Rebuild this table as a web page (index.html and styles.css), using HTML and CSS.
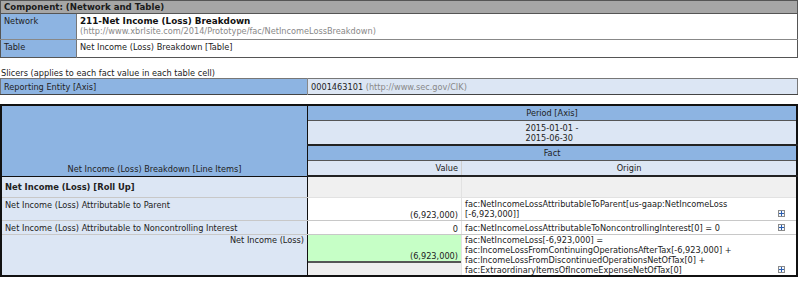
FILE: index.html
```html
<!DOCTYPE html>
<html>
<head>
<meta charset="utf-8">
<link rel="stylesheet" href="styles.css">
</head>
<body>
<table class="comp">
  <tr><th colspan="2" class="comp-head">Component: (Network and Table)</th></tr>
  <tr class="net-row">
    <td class="lbl">Network</td>
    <td class="val"><div class="net-title">211-Net Income (Loss) Breakdown</div><div class="url">(http://www.xbrlsite.com/2014/Prototype/fac/NetIncomeLossBreakdown)</div></td>
  </tr>
  <tr class="tbl-row">
    <td class="lbl">Table</td>
    <td class="val">Net Income (Loss) Breakdown [Table]</td>
  </tr>
</table>

<div class="slicers-title">Slicers (applies to each fact value in each table cell)</div>
<table class="slicers">
  <tr>
    <td class="s-lbl">Reporting Entity [Axis]</td>
    <td class="s-val">0001463101 <span class="url">(http://www.sec.gov/CIK)</span></td>
  </tr>
</table>

<table class="main">
  <tr class="h1">
    <th rowspan="4" class="corner">Net Income (Loss) Breakdown [Line Items]</th>
    <th colspan="2" class="axis">Period [Axis]</th>
  </tr>
  <tr class="h2">
    <th colspan="2" class="period"><div class="period-text">2015-01-01 -<br>2015-06-30</div></th>
  </tr>
  <tr class="h3">
    <th colspan="2" class="axis fact">Fact</th>
  </tr>
  <tr class="h4">
    <th class="colh value-h">Value</th>
    <th class="colh origin-h">Origin</th>
  </tr>
  <tr class="rollup">
    <td class="line bold">Net Income (Loss) [Roll Up]</td>
    <td class="empty v"></td>
    <td class="empty o"></td>
  </tr>
  <tr class="r-parent">
    <td class="line">Net Income (Loss) Attributable to Parent</td>
    <td class="num">(6,923,000)</td>
    <td class="origin"><div class="origin-wrap"><span class="otext">fac:NetIncomeLossAttributableToParent[us-gaap:NetIncomeLoss<br>[-6,923,000]]</span><span class="plus"></span></div></td>
  </tr>
  <tr class="r-nci">
    <td class="line">Net Income (Loss) Attributable to Noncontrolling Interest</td>
    <td class="num">0</td>
    <td class="origin"><div class="origin-wrap"><span class="otext">fac:NetIncomeLossAttributableToNoncontrollingInterest[0] = 0</span><span class="plus"></span></div></td>
  </tr>
  <tr class="r-total">
    <td class="line right">Net Income (Loss)</td>
    <td class="num total"><div class="total-box">(6,923,000)</div></td>
    <td class="origin"><div class="origin-wrap"><span class="otext">fac:NetIncomeLoss[-6,923,000] =<br>fac:IncomeLossFromContinuingOperationsAfterTax[-6,923,000] +<br>fac:IncomeLossFromDiscontinuedOperationsNetOfTax[0] +<br>fac:ExtraordinaryItemsOfIncomeExpenseNetOfTax[0]</span><span class="plus"></span></div></td>
  </tr>
</table>
</body>
</html>
```

FILE: styles.css
```css
html, body {
  margin: 0;
  padding: 0;
  background: #ffffff;
}
body {
  font-family: "DejaVu Sans", Verdana, sans-serif;
  font-size: 8.2px;
  line-height: 10px;
  color: #222222;
}
table {
  border-collapse: collapse;
  border-spacing: 0;
}
th, td {
  padding: 0;
  font-weight: normal;
}

/* component table */
.comp {
  width: 798px;
  border: 1px solid #555555;
}
.comp-head {
  background: #a6a6a6;
  text-align: left;
  font-weight: bold;
  font-size: 8.6px;
  height: 12px;
  padding: 0 3px;
  border-bottom: 1px solid #555555;
  color: #1a1a1a;
}
.comp .lbl {
  width: 69px;
  background: #8db4e2;
  border-right: 1px solid #777777;
  vertical-align: top;
  padding: 2px 3px 0 3px;
}
.comp .val {
  background: #ffffff;
  vertical-align: top;
  padding: 2px 3px 0 3px;
}
.net-row td {
  height: 23px;
  border-bottom: 1px solid #888888;
}
.tbl-row td {
  height: 15px;
}
.net-title {
  font-weight: bold;
  font-size: 8.8px;
  color: #111111;
}
.url {
  color: #888888;
}

.slicers-title {
  margin-top: 10px;
  height: 10px;
  padding-left: 1px;
}
.slicers {
  width: 798px;
  border: 1px solid #777777;
  border-bottom-color: #444444;
  margin-top: 0;
}
.slicers td {
  height: 15px;
  padding: 0 3px;
  vertical-align: middle;
}
.s-lbl {
  width: 300px;
  background: #8db4e2;
  border-right: 1px solid #888888;
}
.s-val {
  background: #dce6f4;
}

/* main table */
.main {
  width: 798px;
  margin-top: 9px;
  border: 2px solid #111111;
}
.corner {
  width: 305px;
  background: #8db4e2;
  border-right: 1px solid #111111;
  border-bottom: 1px solid #111111;
  vertical-align: bottom;
  text-align: center;
  padding-bottom: 2px;
}
.axis {
  background: #8db4e2;
  text-align: center;
  height: 14px;
  border-bottom: 1px solid #555555;
}
.period {
  background: #dce6f4;
  height: 23px;
  text-align: center;
  border-bottom: 2px solid #222222;
}
.period-text {
  display: inline-block;
  text-align: left;
}
.fact {
  border-bottom: 1px solid #555555;
}
.colh {
  background: #dce6f4;
  height: 14px;
  border-bottom: 2px solid #222222;
}
.value-h {
  width: 150px;
  text-align: right;
  padding-right: 3px;
  border-right: 1px solid #cfcfcf;
}
.origin-h {
  text-align: center;
}

.line {
  background: #dce6f4;
  border-right: 1px solid #111111;
  border-bottom: 1px solid #c8c8c8;
  vertical-align: top;
  padding: 0 3px;
}
.line.bold {
  font-weight: bold;
  vertical-align: middle;
  font-size: 8.4px;
}
.line.right {
  text-align: right;
}
.rollup td {
  height: 20px;
}
.empty {
  background: #f0f0f0;
  border-bottom: 1px solid #e2e2e2;
}
.empty.v {
  border-right: 1px solid #e2e2e2;
}
.num {
  text-align: right;
  vertical-align: bottom;
  padding: 0 3px;
  border-right: 1px solid #e2e2e2;
  border-bottom: 1px solid #c8c8c8;
  background: #ffffff;
}
.origin {
  vertical-align: top;
  padding: 0 3px;
  border-bottom: 1px solid #c8c8c8;
}
.origin-wrap {
  display: flex;
  justify-content: space-between;
  align-items: flex-end;
}
.plus {
  position: relative;
  flex: none;
  width: 5px;
  height: 5px;
  border: 1px solid #8a8a8a;
  background: #f4f8fc;
  margin: 0 8px 2px 0;
}
.plus::before, .plus::after {
  content: "";
  position: absolute;
  background: #2a5db0;
}
.plus::before {
  left: 0;
  top: 2px;
  width: 5px;
  height: 1px;
}
.plus::after {
  left: 2px;
  top: 0;
  width: 1px;
  height: 5px;
}
.r-parent td {
  height: 20px;
}
.r-parent .line {
  padding-top: 2px;
}
.r-parent .origin {
  padding-top: 1px;
}
.r-nci td {
  height: 13px;
}
.r-nci .line, .r-nci .origin {
  vertical-align: middle;
}
.r-total td {
  height: 40px;
}
.r-total .line {
  border-bottom: none;
}
.num.total {
  padding: 0;
  vertical-align: top;
  background: #eeeeee;
  border-bottom: none;
}
.total-box {
  background: #c6ffc6;
  height: 28px;
  box-sizing: border-box;
  padding: 0 3px;
  display: flex;
  align-items: flex-end;
  justify-content: flex-end;
  border-bottom: 2px solid #555555;
}
.r-total .origin {
  border-bottom: none;
}
```
